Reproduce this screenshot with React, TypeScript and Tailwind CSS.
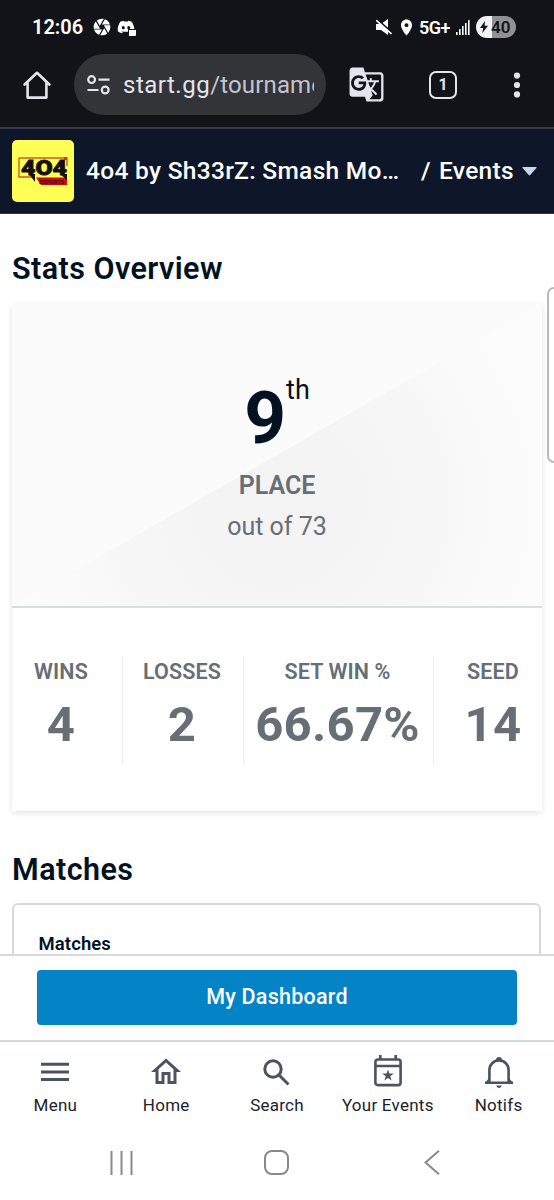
import type { ReactNode } from 'react';
import { FaDiscord } from 'react-icons/fa';
import { MdCamera, MdGTranslate, MdLocationOn, MdOutlineHome } from 'react-icons/md';

const stats = [
  { label: 'WINS', value: '4', width: 'w-[121px]' },
  { label: 'LOSSES', value: '2', width: 'w-[121px]' },
  { label: 'SET WIN %', value: '66.67%', width: 'w-[190px]' },
  { label: 'SEED', value: '14', width: 'w-[120px]' },
];

function StatusBar() {
  return (
    <div className="flex h-[54px] items-center pl-8 pr-[38px] text-white">
      <span className="w-[61px] whitespace-nowrap text-[20px] font-semibold">12:06</span>
      <MdCamera size={20} className="-ml-[1px]" />
      <div className="relative ml-[5px]">
        <FaDiscord size={18} />
        <span className="absolute -right-[1px] bottom-0 h-[7px] w-[8px] rounded-[1px] border-l border-t border-[#121318] bg-white" />
      </div>
      <div className="ml-auto flex items-center">
        <svg width="16" height="16" viewBox="0 0 16 16" fill="currentColor" className="mr-[5px]">
          <path d="M0 5h5l7-5v16l-7-5H0z" />
          <path d="M0 -.5 16 13.5" stroke="#121318" strokeWidth="2" />
          <path d="M0 1.2 15.5 15" stroke="currentColor" strokeWidth="1.6" />
        </svg>
        <MdLocationOn size={19} className="mr-[3px]" />
        <span className="w-[37px] whitespace-nowrap text-[18px] font-semibold tracking-[-0.5px]">5G+</span>
        <svg width="14" height="15" viewBox="0 0 14 15" fill="currentColor" className="mr-[6px]">
          <path d="M0 12h1.6v3H0zM3 9h1.6v6H3zM6 6h1.6v9H6zM9 3h1.6v12H9zM12 0h1.6v15H12z" />
        </svg>
        <div className="flex h-[22px] w-[40px] items-center rounded-full bg-[linear-gradient(90deg,#f2f2f2_40%,#909194_40%)] pl-[4px] text-[#121318]">
          <svg width="8" height="12" viewBox="0 0 8 12" fill="currentColor">
            <path d="M5 0 0 7h3.2L2.4 12 8 4.8H4.6z" />
          </svg>
          <span className="ml-[3px] text-[17px] font-semibold leading-none">40</span>
        </div>
      </div>
    </div>
  );
}

function BrowserBar() {
  return (
    <div className="flex h-[73px] items-start text-[#e4e4ec]">
      <svg width="28" height="28" viewBox="0 0 28 28" fill="none" stroke="currentColor" strokeWidth="2.6" strokeLinejoin="round" strokeLinecap="round" className="ml-[23px] mt-[17px]">
        <path d="M1.6 13.5 14 1.8l12.4 11.7M4.6 11.5v15.1h18.8V11.5" />
      </svg>
      <div className="ml-[23px] flex h-[61px] w-[252px] items-center rounded-full bg-[#333438] pl-[13px] pr-[12px]">
        <svg width="23" height="20" viewBox="0 0 23 20" fill="none" stroke="currentColor" strokeWidth="2.2">
          <circle cx="4.6" cy="4.6" r="3.4" />
          <path d="M11.5 4.6h11M.5 15h11" />
          <circle cx="18.2" cy="15" r="3.4" />
        </svg>
        <span className="ml-[13px] w-[191px] overflow-hidden whitespace-nowrap text-[24px] tracking-[0.5px]">
          start.gg<span className="tracking-[0.15px] text-[#c4c4cf]">/tournament</span>
        </span>
      </div>
      <MdGTranslate size={37} className="ml-[22px] mt-[12px]" />
      <div className="ml-[44px] mt-[17px] flex size-[28px] items-center justify-center rounded-[7px] border-[2.5px] border-current text-[16px] font-bold">
        1
      </div>
      <svg width="8" height="26" viewBox="0 0 8 26" fill="currentColor" className="ml-[56px] mt-[18px]">
        <circle cx="4" cy="3.6" r="3.1" />
        <circle cx="4" cy="13" r="3.1" />
        <circle cx="4" cy="22.4" r="3.1" />
      </svg>
    </div>
  );
}

function TeamLogo() {
  return (
    <svg width="62" height="62" viewBox="0 0 62 62" className="rounded-[5px] bg-[#ffff55]">
      <path d="M7 18h48v8M7 18v19h14" fill="none" stroke="#cf5b2b" strokeWidth="1.4" />
      <path d="M24 37.5h31V45H29z" fill="#c90b13" />
      <path d="M17 34h6v8zM48 34h7v6z" fill="#15100f" />
      <text x="9" y="35" textLength="46" lengthAdjust="spacingAndGlyphs" fontFamily="Roboto" fontWeight="900" fontSize="21" fill="#15100f" stroke="#15100f" strokeWidth="0.8">4O4</text>
      <text x="27" y="43.5" textLength="25" lengthAdjust="spacingAndGlyphs" fontFamily="Roboto" fontWeight="bold" fontSize="5" fill="#4c080a">ESPORTS</text>
      <path d="M52 17h3v3h-3z" fill="#d43a20" />
    </svg>
  );
}

function TournamentHeader() {
  return (
    <header className="flex h-[87px] items-center border-b border-t-2 border-b-[#303846] border-t-[#383b47] bg-[#0e172a] pl-3 text-[24.5px] font-medium text-white">
      <TeamLogo />
      <span className="ml-3 w-[335px] whitespace-nowrap tracking-[0.3px]">4o4 by Sh33rZ: Smash Mo…</span>
      <span className="w-[18px]">/</span>
      <span className="w-[83px] whitespace-nowrap tracking-[0.3px]">Events</span>
      <svg width="15" height="9" viewBox="0 0 15 9" fill="#c9d5ee">
        <path d="M1 0h13q1 0 .4 1L8.2 8q-.7.8-1.4 0L.6 1Q0 0 1 0" />
      </svg>
    </header>
  );
}

function StatsCard() {
  return (
    <section className="h-[508px] bg-white shadow-[0_2px_6px_rgba(0,0,0,0.11)]">
      <div className="flex h-[305px] flex-col items-center border-b-2 border-[#dadde1] bg-[linear-gradient(to_bottom_right,#fbfbfb_50%,transparent_50.2%),radial-gradient(circle_at_50%_65%,#f3f3f3_0%,#f5f5f5_35%,#fcfcfc_80%)] text-[#666e76]">
        <div className="mt-[70px] flex text-[#031223]">
          <span className="mt-[9px] text-[73px] font-bold leading-[73px]">9</span>
          <span className="mt-[1px] text-[27px] leading-[32px]">th</span>
        </div>
        <div className="mt-[15px] text-[25px] font-semibold leading-[32px]">PLACE</div>
        <div className="mt-[9px] text-[25px] leading-[32px]">out of 73</div>
      </div>
      <div className="-ml-[10px] -mr-[12px] flex pt-[48px]">
        {stats.map(stat => (
          <div key={stat.label} className={`${stat.width} h-[108px] border-r border-[#eeeeef] pr-[2px] text-center text-[#666e76] last:border-r-0`}>
            <div className="whitespace-nowrap pt-[1px] text-[21.5px] font-semibold leading-[30px] tracking-[0.1px]">{stat.label}</div>
            <div className="mt-[8px] text-[49px] font-bold leading-[60px] tracking-[0.3px]">{stat.value}</div>
          </div>
        ))}
      </div>
    </section>
  );
}

function NavItem({ label, children }: { label: string; children: ReactNode }) {
  return (
    <div className="flex flex-1 flex-col items-center text-[#4b5260]">
      <div className="flex h-[36px] items-center">{children}</div>
      <span className="mt-[4px] whitespace-nowrap text-[17px] leading-[22px] tracking-[0.25px] text-[#1c222d]">{label}</span>
    </div>
  );
}

function BottomNav() {
  return (
    <nav className="flex h-[80px] border-t-2 border-[#d3d6dc] pt-[12px]">
      <NavItem label="Menu">
        <svg width="28" height="20" viewBox="0 0 28 20" fill="currentColor">
          <path d="M0 .7h28v3H0zM0 8.4h28v3H0zM0 16.1h28v3H0z" />
        </svg>
      </NavItem>
      <NavItem label="Home">
        <MdOutlineHome size={36} />
      </NavItem>
      <NavItem label="Search">
        <svg width="27" height="27" viewBox="0 0 27 27" fill="none" stroke="currentColor" strokeWidth="3">
          <circle cx="10" cy="10" r="8.2" />
          <path d="m16 16 9.5 9.5" />
        </svg>
      </NavItem>
      <NavItem label="Your Events">
        <svg width="28" height="32" viewBox="0 0 28 32" fill="none" stroke="currentColor" strokeWidth="2.6" className="-mt-[2px]">
          <rect x="1.4" y="4.5" width="25.2" height="25.6" rx="2.4" />
          <path d="M1.4 11h25.2M6.3 0v4M21.7 0v4" />
          <path d="m14 14.5 1.4 4.1h4.3l-3.4 2.6 1.3 4.2-3.6-2.5-3.6 2.5 1.3-4.2-3.4-2.6h4.3z" fill="currentColor" stroke="none" />
        </svg>
      </NavItem>
      <NavItem label="Notifs">
        <svg width="28" height="32" viewBox="0 0 28 32" fill="none" stroke="currentColor" strokeWidth="2.6">
          <path d="M4.4 26V14a9.6 9.6 0 0 1 19.2 0v12M0 26.7h28" />
          <path d="M11 4a3 3 0 0 1 6 0zM11 29.5h6q-3 5-6 0M4 22l-4 5h5zM24 22l4 5h-5z" fill="currentColor" stroke="none" />
        </svg>
      </NavItem>
    </nav>
  );
}

function SystemNav() {
  return (
    <div className="flex h-[80px] items-center justify-between pl-[110px] pr-[114px] pt-[5px] text-[#89898b]">
      <svg width="23" height="24" viewBox="0 0 23 24" stroke="currentColor" strokeWidth="2">
        <path d="M1.5 0v24M11.5 0v24M21.5 0v24" />
      </svg>
      <div className="mr-[5px] size-[25px] rounded-[8px] border-2 border-current" />
      <svg width="16" height="25" viewBox="0 0 16 25" fill="none" stroke="currentColor" strokeWidth="2">
        <path d="M15 .8 1.5 12.5 15 24.2" />
      </svg>
    </div>
  );
}

export default function App() {
  return (
    <div className="relative flex h-[1200px] w-[554px] flex-col overflow-hidden bg-white font-['Roboto',sans-serif]">
      <div className="bg-[#121318]">
        <StatusBar />
        <BrowserBar />
      </div>
      <TournamentHeader />
      <main className="h-[740px] shrink-0 overflow-hidden px-3 pt-[35px]">
        <h2 className="mb-[14px] text-[30.5px] font-semibold leading-10 tracking-[0.45px] text-[#031223]">Stats Overview</h2>
        <StatsCard />
        <h2 className="mt-[39px] text-[30.5px] font-semibold leading-10 tracking-[0.45px] text-[#031223]">Matches</h2>
        <div className="mr-[1px] mt-[13px] h-[200px] rounded-[6px] border-2 border-[#d6d9dc] pl-[24.5px] pt-[26px] text-[18.5px] font-semibold tracking-[0.1px] text-[#031223]">
          Matches
        </div>
      </main>
      <div className="h-[86px] shrink-0 border-t-2 border-[#d8dade] bg-white px-[37px] pt-[14px]">
        <button className="h-[55px] w-full rounded-[4px] bg-[#0583c7] text-[21.5px] font-medium tracking-[0.25px] text-white">My Dashboard</button>
      </div>
      <BottomNav />
      <SystemNav />
      <div className="absolute -right-[12px] top-[287px] h-[176px] w-[19px] rounded-[7px] border-2 border-[#b8b9bb] bg-white" />
    </div>
  );
}
